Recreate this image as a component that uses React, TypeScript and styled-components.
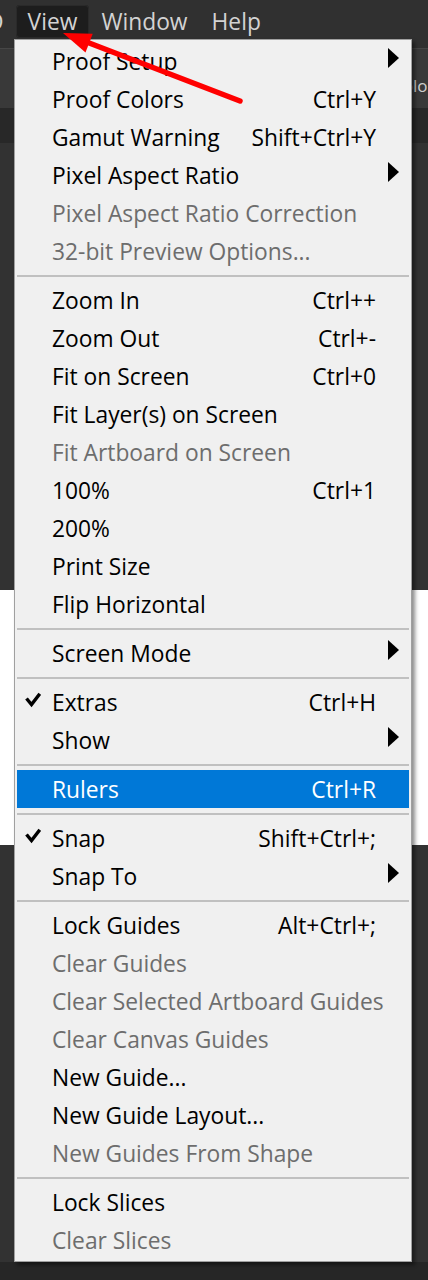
import React from "react";
import styled, { createGlobalStyle } from "styled-components";

const GlobalStyle = createGlobalStyle`
  html, body { margin: 0; padding: 0; background: #323232; }
  body { font-family: "Open Sans", "Noto Sans", "DejaVu Sans", sans-serif; }
`;

const Page = styled.div`
  position: relative;
  width: 428px;
  height: 1280px;
  overflow: hidden;
  display: flex;
  flex-direction: column;
  background: #323232;
`;

const MenuBar = styled.div`
  flex: none;
  height: 49px;
  box-sizing: border-box;
  padding-top: 5px;
  display: flex;
  align-items: flex-start;
  background: #303030;
  border-bottom: 1px solid #464646;
`;

const BarItem = styled.div<{ $active?: boolean; $shift?: number }>`
  height: 33px;
  line-height: 34px;
  padding: 0 12px;
  margin-left: ${(p) => p.$shift ?? 0}px;
  font-size: 22.8px;
  color: #d3d3d3;
  white-space: nowrap;
  border-radius: 4px;
  box-sizing: border-box;
  background: ${(p) => (p.$active ? "#1d1d1d" : "transparent")};
  box-shadow: ${(p) => (p.$active ? "inset 0 0 0 1px #2a2a2a" : "none")};
`;

const OptionsBar = styled.div`
  flex: none;
  height: 59px;
  box-sizing: border-box;
  padding: 27px 0 0 392px;
  background: #393939;
  font-size: 17px;
  line-height: 20px;
  color: #cdcdcd;
  white-space: nowrap;
`;

const TabBar = styled.div`
  flex: none;
  height: 35px;
  background: #282828;
`;

const Workspace = styled.div<{ $h: number }>`
  flex: none;
  height: ${(p) => p.$h}px;
  background: #323232;
`;

const Document = styled.div`
  flex: none;
  height: 255px;
  background: #ffffff;
`;

const StatusBar = styled.div`
  flex: 1;
  background: #262626;
`;

const Menu = styled.div`
  position: absolute;
  top: 39px;
  left: 14px;
  width: 398px;
  box-sizing: border-box;
  padding: 2px;
  background: #f0f0f0;
  border: 1px solid #a0a0a0;
  box-shadow: 3px 3px 4px rgba(0, 0, 0, 0.45);
  display: flex;
  flex-direction: column;
`;

const Row = styled.div<{ $active?: boolean; $disabled?: boolean }>`
  height: 38px;
  box-sizing: border-box;
  padding-top: 1px;
  display: grid;
  grid-template-columns: 35px minmax(0, 1fr) auto 33px;
  align-items: center;
  font-size: 22.8px;
  line-height: 37px;
  white-space: nowrap;
  background: ${(p) => (p.$active ? "#0078d7" : "transparent")};
  color: ${(p) => (p.$active ? "#ffffff" : p.$disabled ? "#6d6d6d" : "#000000")};
`;

const CheckCell = styled.div`
  display: flex;
  align-items: center;
  padding-left: 8px;
  margin-top: -5px;
`;

const Label = styled.span`
  overflow: visible;
`;

const Shortcut = styled.span`
  text-align: right;
`;

const ArrowCell = styled.div`
  display: flex;
  align-items: center;
  padding-left: 12px;
  margin-top: -7px;
`;

const Separator = styled.div`
  height: 2px;
  margin: 5px 0 4px;
  background: #c0c0c0;
`;

const Overlay = styled.svg`
  position: absolute;
  top: 0;
  left: 0;
  pointer-events: none;
`;

type Entry =
  | {
      label: string;
      shortcut?: string;
      sub?: boolean;
      disabled?: boolean;
      checked?: boolean;
      active?: boolean;
    }
  | "sep";

const items: Entry[] = [
  { label: "Proof Setup", sub: true },
  { label: "Proof Colors", shortcut: "Ctrl+Y" },
  { label: "Gamut Warning", shortcut: "Shift+Ctrl+Y" },
  { label: "Pixel Aspect Ratio", sub: true },
  { label: "Pixel Aspect Ratio Correction", disabled: true },
  { label: "32-bit Preview Options...", disabled: true },
  "sep",
  { label: "Zoom In", shortcut: "Ctrl++" },
  { label: "Zoom Out", shortcut: "Ctrl+-" },
  { label: "Fit on Screen", shortcut: "Ctrl+0" },
  { label: "Fit Layer(s) on Screen" },
  { label: "Fit Artboard on Screen", disabled: true },
  { label: "100%", shortcut: "Ctrl+1" },
  { label: "200%" },
  { label: "Print Size" },
  { label: "Flip Horizontal" },
  "sep",
  { label: "Screen Mode", sub: true },
  "sep",
  { label: "Extras", shortcut: "Ctrl+H", checked: true },
  { label: "Show", sub: true },
  "sep",
  { label: "Rulers", shortcut: "Ctrl+R", active: true },
  "sep",
  { label: "Snap", shortcut: "Shift+Ctrl+;", checked: true },
  { label: "Snap To", sub: true },
  "sep",
  { label: "Lock Guides", shortcut: "Alt+Ctrl+;" },
  { label: "Clear Guides", disabled: true },
  { label: "Clear Selected Artboard Guides", disabled: true },
  { label: "Clear Canvas Guides", disabled: true },
  { label: "New Guide..." },
  { label: "New Guide Layout..." },
  { label: "New Guides From Shape", disabled: true },
  "sep",
  { label: "Lock Slices" },
  { label: "Clear Slices", disabled: true },
];

const Check = () => (
  <svg width="16" height="16" viewBox="0 0 16 16">
    <path d="M1.5 6.5 L6.5 12.5 L14.8 1.8" fill="none" stroke="#000" strokeWidth="3.4" strokeLinejoin="miter" />
  </svg>
);

const SubArrow = () => (
  <svg width="11" height="20" viewBox="0 0 11 20">
    <path d="M0 0 L11 10 L0 20 Z" fill="#000" />
  </svg>
);

export default function App() {
  return (
    <>
      <GlobalStyle />
      <Page>
        <MenuBar>
          <BarItem $shift={-38}>3D</BarItem>
          <BarItem $active>View</BarItem>
          <BarItem>Window</BarItem>
          <BarItem>Help</BarItem>
        </MenuBar>
        <OptionsBar>Colors</OptionsBar>
        <TabBar />
        <Workspace $h={447} />
        <Document />
        <Workspace $h={417} />
        <StatusBar />

        <Menu>
          {items.map((it, i) =>
            it === "sep" ? (
              <Separator key={i} />
            ) : (
              <Row key={i} $active={it.active} $disabled={it.disabled}>
                <CheckCell>{it.checked ? <Check /> : null}</CheckCell>
                <Label>{it.label}</Label>
                <Shortcut>{it.shortcut ?? ""}</Shortcut>
                <ArrowCell>{it.sub ? <SubArrow /> : null}</ArrowCell>
              </Row>
            )
          )}
        </Menu>

        <Overlay width="428" height="120" viewBox="0 0 428 120">
          <line x1="240" y1="101" x2="84" y2="41" stroke="#ff0000" strokeWidth="5.5" strokeLinecap="round" />
          <polygon points="63,33 92.7,33.7 85.5,52.4" fill="#ff0000" />
        </Overlay>
      </Page>
    </>
  );
}
